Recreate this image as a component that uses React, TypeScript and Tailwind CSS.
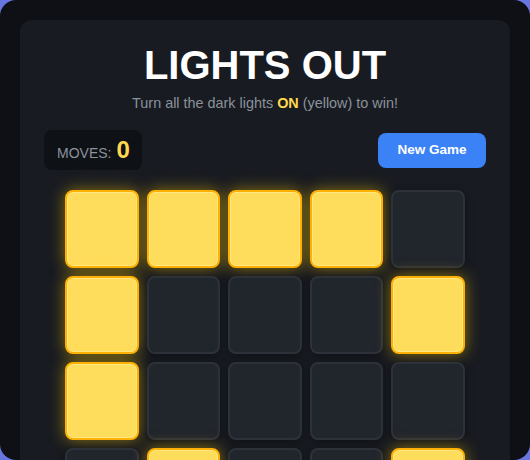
const board: number[][] = [
  [1, 1, 1, 1, 0],
  [1, 0, 0, 0, 1],
  [1, 0, 0, 0, 0],
  [0, 1, 0, 0, 1],
  [1, 0, 1, 0, 0],
];

function Tile({ on }: { on: boolean }) {
  return (
    <button
      className={
        on
          ? 'h-[78px] rounded-lg border-2 border-[#ffb000] bg-[#ffdd5c] shadow-[0_0_16px_rgba(255,204,0,0.5),inset_0_0_0_1px_rgba(255,240,160,0.6)]'
          : 'h-[78px] rounded-lg border-2 border-[#2d3139] bg-[#21252c] shadow-[0_2px_8px_rgba(0,0,0,0.35)]'
      }
    />
  );
}

export default function App() {
  return (
    <div className="h-[460px] w-[530px] overflow-hidden bg-[#6a76e0] font-['Liberation_Sans',Arial,sans-serif]">
      <div className="h-full overflow-hidden rounded-2xl bg-[#0e1016] p-5">
        <div className="min-h-[520px] rounded-xl bg-[#181b21] px-6 pt-[21px]">
          <h1 className="text-center text-[40px] font-bold leading-[48px] text-white">LIGHTS OUT</h1>
          <p className="mt-1 text-center text-[14.4px] leading-5 text-[#8b929c]">
            Turn all the dark lights <span className="font-bold text-[#ffd84d]">ON</span> (yellow) to
            win!
          </p>

          <div className="mt-[17px] flex items-center justify-between">
            <div className="flex items-baseline gap-[5px] rounded-lg bg-[#0e1116] py-1 pl-[13px] pr-3">
              <span className="text-sm text-[#8b929c]">MOVES:</span>
              <span className="text-2xl font-bold text-[#ffd84d]">0</span>
            </div>
            <button className="h-[35px] w-[108px] rounded-lg bg-[#3b82f6] text-[13.5px] font-bold text-white">
              New Game
            </button>
          </div>

          <div className="mx-auto mt-5 grid w-[400px] grid-cols-5 gap-2">
            {board.flat().map((v, i) => (
              <Tile key={i} on={v === 1} />
            ))}
          </div>
        </div>
      </div>
    </div>
  );
}
